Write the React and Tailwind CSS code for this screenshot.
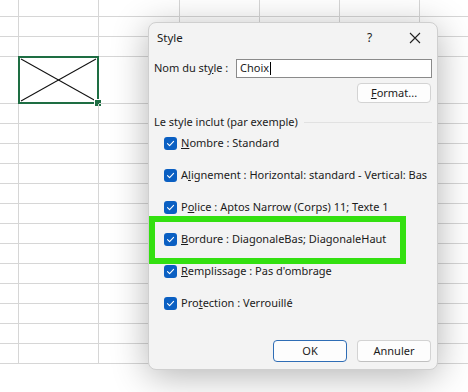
import React from 'react';

const ROWS = [17, 20, 20, 47, 20, 20, 20, 20, 20, 20, 20, 20, 20, 20, 20, 20, 20];
const COLS = [19, 80, 81, 80, 80, 80, 48];

const items = [
  { pre: '', key: 'N', post: 'ombre : Standard' },
  { pre: 'A', key: 'l', post: 'ignement : Horizontal: standard - Vertical: Bas' },
  { pre: 'P', key: 'o', post: 'lice : Aptos Narrow (Corps) 11; Texte 1' },
  { pre: '', key: 'B', post: 'ordure : DiagonaleBas; DiagonaleHaut' },
  { pre: '', key: 'R', post: 'emplissage : Pas d\'ombrage' },
  { pre: 'Pro', key: 't', post: 'ection : Verrouillé' },
];

function Sheet() {
  return (
    <div className="flex flex-col">
      {ROWS.map((h, r) => (
        <div key={r} className="flex" style={{ height: h }}>
          {COLS.map((w, c) => {
            const selected = r === 3 && c === 1;
            return (
              <div
                key={c}
                className={`relative shrink-0 border-b border-r ${c === COLS.length - 1 ? 'border-r-0' : ''} border-[#d6d6d6]`}
                style={{ width: w }}
              >
                {selected && (
                  <div className="absolute -left-px -top-px -right-px -bottom-px border-2 border-[#1e6e43]">
                    <svg className="absolute inset-0 h-full w-full" viewBox="0 0 76 43" preserveAspectRatio="none">
                      <line x1="1" y1="1" x2="75" y2="42" stroke="#111" strokeWidth="1" />
                      <line x1="1" y1="42" x2="75" y2="1" stroke="#111" strokeWidth="1" />
                    </svg>
                    <div className="absolute -bottom-[4px] -right-[4px] h-[6px] w-[6px] bg-[#1e6e43] ring-1 ring-white" />
                  </div>
                )}
              </div>
            );
          })}
        </div>
      ))}
    </div>
  );
}

function Check() {
  return (
    <div className="flex h-[13px] w-[13px] shrink-0 items-center justify-center rounded-[3px] bg-[#0a5fc2]">
      <svg width="9" height="9" viewBox="0 0 9 9">
        <path d="M1.5 4.6 L3.6 6.6 L7.6 2.4" fill="none" stroke="#fff" strokeWidth="1.1" strokeLinecap="round" strokeLinejoin="round" />
      </svg>
    </div>
  );
}

function Btn({ children, primary }) {
  return (
    <div
      className={`flex h-[22px] w-[74px] items-center justify-center rounded-[4px] bg-[#fdfdfd] ${
        primary ? 'border border-[#2f6db5] border-b-[1.5px]' : 'border border-[#d3d3d3] border-b-[#c0c0c0]'
      }`}
    >
      {children}
    </div>
  );
}

export default function App() {
  return (
    <div className="relative h-[392px] w-[468px] overflow-hidden bg-white font-['Noto_Sans','Liberation_Sans',sans-serif] text-[11px] text-[#1b1b1b]">
      <Sheet />

      {/* Style dialog */}
      <div className="absolute left-[148px] top-[22px] flex h-[348px] w-[290px] flex-col rounded-[8px] border border-[#cfcfcf] bg-[#f3f3f3] shadow-[0_6px_36px_rgba(0,0,0,0.30)]">
        <div className="flex h-[30px] items-center">
          <span className="pl-[8px] text-[11.5px] leading-none">Style</span>
          <div className="flex-1" />
          <div className="flex h-full w-[45px] items-center justify-center text-[12px]">?</div>
          <div className="flex h-full w-[45px] items-center justify-center">
            <svg width="12" height="12" viewBox="0 0 12 12">
              <path d="M1 1 L11 11 M11 1 L1 11" stroke="#222" strokeWidth="1.1" />
            </svg>
          </div>
        </div>

        <div className="mt-[6px] flex items-center">
          <span className="w-[87px] pl-[5px]">
            Nom du st<span className="underline">y</span>le :
          </span>
          <div className="flex h-[19px] w-[196px] items-center border border-[#8a8a8a] bg-white pl-[3px]">
            Choix<span className="ml-px h-[13px] w-px bg-black" />
          </div>
        </div>

        <div className="mt-[5px] flex justify-end pr-[6px]">
          <div className="flex h-[20px] w-[74px] items-center justify-center rounded-[4px] border border-[#d3d3d3] bg-[#fdfdfd]">
            <span className="underline">F</span>ormat...
          </div>
        </div>

        <div className="mt-[12px] flex h-[14px] items-center pl-[5px] pr-[5px]">
          <span className="whitespace-nowrap">Le style inclut (par exemple)</span>
          <div className="ml-[6px] h-px flex-1 bg-[#e1e1e1]" />
        </div>

        <div className="-mt-[2px] flex flex-col">
          {items.map((it, i) => (
            <div key={i} className="flex h-[32px] items-center gap-[4px] pl-[15px]">
              <Check />
              <span className="whitespace-nowrap">
                {it.pre}
                <span className="underline">{it.key}</span>
                {it.post}
              </span>
            </div>
          ))}
        </div>

        <div className="mt-[21px] flex justify-end gap-[10px] pr-[6px]">
          <Btn primary>OK</Btn>
          <Btn>Annuler</Btn>
        </div>

        {/* highlight */}
        <div className="absolute left-0 top-[193px] h-[48px] w-[257px] border-[6px] border-[#33e010]" />
      </div>
    </div>
  );
}
